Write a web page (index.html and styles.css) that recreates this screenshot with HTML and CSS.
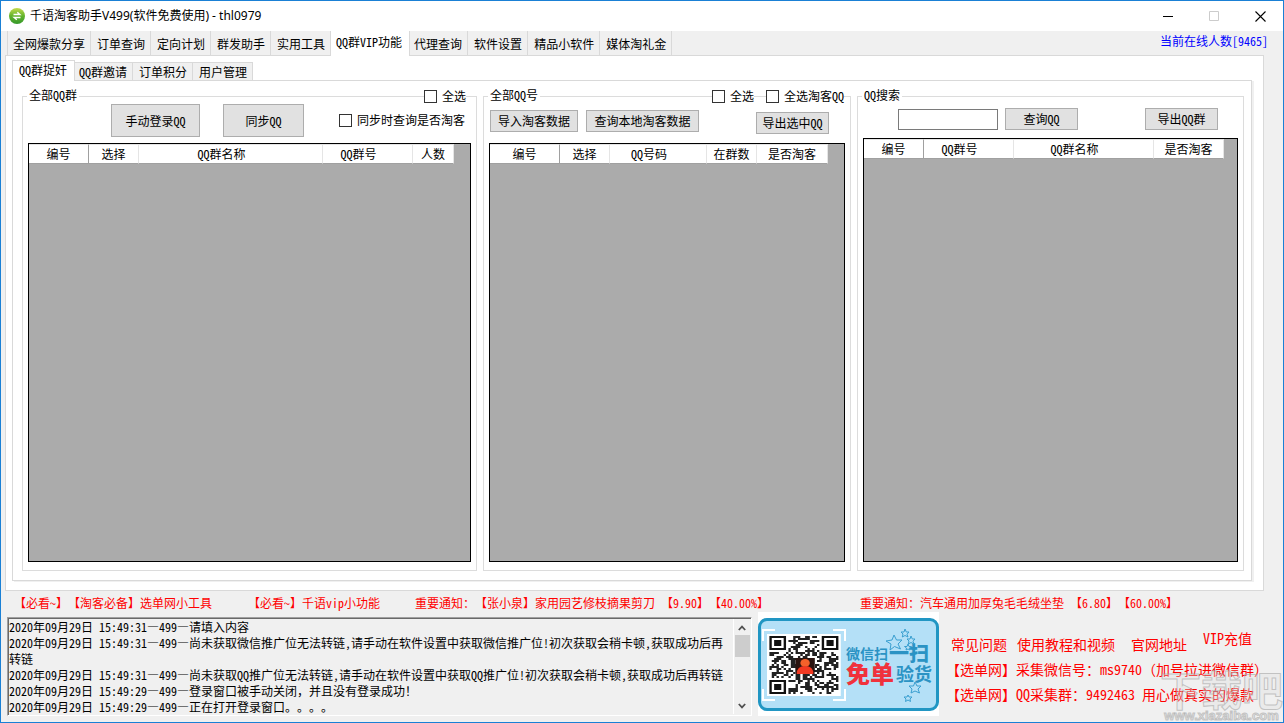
FILE: index.html
```html
<!DOCTYPE html>
<html lang="zh-CN">
<head>
<meta charset="utf-8">
<title>千语淘客助手V499(软件免费使用) - thl0979</title>
<link rel="stylesheet" href="styles.css">
</head>
<body>
<div class="window">
  <header class="titlebar">
    <svg class="app-icon" viewBox="0 0 16 16" aria-hidden="true">
      <defs><linearGradient id="leaf" x1="0" y1="0" x2="0" y2="1"><stop offset="0" stop-color="#c3da4c"/><stop offset=".5" stop-color="#62b32c"/><stop offset="1" stop-color="#35982c"/></linearGradient></defs>
      <circle cx="8" cy="8" r="8" fill="url(#leaf)"/>
      <path d="M4.500 6.500H10.500M8.300 4.300L10.800 6.500H8.500M11.500 9.500H5.500M7.800 11.700L5.200 9.500H7.500" fill="none" stroke="#fff" stroke-width="1.4"/>
    </svg>
    <h1 class="title">千语淘客助手V499(软件免费使用) - thl0979</h1>
    <button class="winbtn" type="button" aria-label="最小化"><svg viewBox="0 0 11 11"><path d="M0 5.500H10" stroke="#000"/></svg></button>
    <button class="winbtn" type="button" aria-label="最大化" disabled><svg viewBox="0 0 11 11"><path d="M.5 .5H9.500V9.500H.5Z" fill="none" stroke="#ccc"/></svg></button>
    <button class="winbtn" type="button" aria-label="关闭"><svg viewBox="0 0 11 11"><path d="M.5 .5L10.500 10.500M10.500 .5L.5 10.500" stroke="#000" stroke-width="1.1"/></svg></button>
  </header>

  <nav class="tabs main-tabs">
    <button type="button" class="tab">全网爆款分享</button>
    <button type="button" class="tab">订单查询</button>
    <button type="button" class="tab">定向计划</button>
    <button type="button" class="tab">群发助手</button>
    <button type="button" class="tab">实用工具</button>
    <button type="button" class="tab active">QQ群VIP功能</button>
    <button type="button" class="tab">代理查询</button>
    <button type="button" class="tab">软件设置</button>
    <button type="button" class="tab">精品小软件</button>
    <button type="button" class="tab">媒体淘礼金</button>
    <span class="online">当前在线人数[9465]</span>
  </nav>

  <main class="page">
    <nav class="tabs sub-tabs">
      <button type="button" class="tab active">QQ群捉奸</button>
      <button type="button" class="tab">QQ群邀请</button>
      <button type="button" class="tab">订单积分</button>
      <button type="button" class="tab">用户管理</button>
    </nav>
    <div class="panel">
      <fieldset class="group group-a">
        <legend>全部QQ群</legend>
        <div class="on-border"><label class="check"><input type="checkbox">全选</label></div>
        <div class="toolbar">
          <button type="button" class="btn big">手动登录QQ</button>
          <button type="button" class="btn big sync">同步QQ</button>
          <label class="check push"><input type="checkbox">同步时查询是否淘客</label>
        </div>
        <div class="grid">
          <table>
            <colgroup><col class="w60"><col class="w50"><col class="w184"><col class="w90"><col class="w41"></colgroup>
            <thead><tr><th class="first">编号</th><th>选择</th><th class="sort">QQ群名称</th><th class="sort">QQ群号</th><th>人数</th></tr></thead>
          </table>
        </div>
      </fieldset>

      <fieldset class="group group-b">
        <legend>全部QQ号</legend>
        <div class="on-border"><label class="check"><input type="checkbox">全选</label><label class="check"><input type="checkbox">全选淘客QQ</label></div>
        <div class="toolbar">
          <button type="button" class="btn">导入淘客数据</button>
          <button type="button" class="btn local">查询本地淘客数据</button>
          <button type="button" class="btn push">导出选中QQ</button>
        </div>
        <div class="grid">
          <table>
            <colgroup><col class="w70"><col class="w50"><col class="w97"><col class="w50"><col class="w71"></colgroup>
            <thead><tr><th class="first">编号</th><th>选择</th><th class="sort">QQ号码</th><th>在群数</th><th>是否淘客</th></tr></thead>
          </table>
        </div>
      </fieldset>

      <fieldset class="group group-c">
        <legend>QQ搜索</legend>
        <div class="toolbar">
          <input class="search" type="text" aria-label="QQ搜索">
          <button type="button" class="btn">查询QQ</button>
          <button type="button" class="btn push">导出QQ群</button>
        </div>
        <div class="grid">
          <table>
            <colgroup><col class="w60"><col class="w90"><col class="w140"><col class="w70"></colgroup>
            <thead><tr><th class="first">编号</th><th class="sort">QQ群号</th><th class="sort">QQ群名称</th><th>是否淘客</th></tr></thead>
          </table>
        </div>
      </fieldset>
    </div>
  </main>

  <div class="notices">
    <a href="#">【必看~】【淘客必备】选单网小工具</a>
    <a href="#">【必看~】千语vip小功能</a>
    <a href="#">重要通知：【张小泉】家用园艺修枝摘果剪刀 【9.90】【40.00%】</a>
    <a href="#">重要通知：汽车通用加厚兔毛毛绒坐垫 【6.80】【60.00%】</a>
  </div>

  <footer class="bottom">
    <div class="log">
      <textarea class="log-text" readonly aria-label="日志">2020年09月29日 15:49:31—499—请填入内容
2020年09月29日 15:49:31—499—尚未获取微信推广位无法转链,请手动在软件设置中获取微信推广位!初次获取会稍卡顿,获取成功后再转链
2020年09月29日 15:49:31—499—尚未获取QQ推广位无法转链,请手动在软件设置中获取QQ推广位!初次获取会稍卡顿,获取成功后再转链
2020年09月29日 15:49:29—499—登录窗口被手动关闭，并且没有登录成功！
2020年09月29日 15:49:29—499—正在打开登录窗口。。。。</textarea>
      <div class="scrollbar" aria-hidden="true">
        <svg viewBox="0 0 8 6"><path d="M.8 5L4 1.600L7.200 5" fill="none" stroke="#505050" stroke-width="1.800"/></svg>
        <div class="track"><div class="thumb"></div></div>
        <svg viewBox="0 0 8 6"><path d="M.8 1L4 4.400L7.200 1" fill="none" stroke="#505050" stroke-width="1.800"/></svg>
      </div>
    </div>

    <div class="banner">
      <div class="card">
        <svg class="qr" viewBox="0 0 84 72" role="img" aria-label="二维码">
          <path d="M1 12V1H13M71 1H83V12M83 60V71H71M13 71H1V60" fill="none" stroke="#fff" stroke-width="2"/>
          <g id="qr" transform="translate(5 5) scale(2.38 2)"></g>
        </svg>
        <div class="slogan">
          <p class="line1"><span>微信扫</span><b>一扫</b></p>
          <p class="line2"><strong>免单</strong><b>验货</b></p>
        </div>
        <svg class="stars" viewBox="0 0 36 74" fill="none" stroke="#3a9fd0" aria-hidden="true">
          <path d="M8 7L10.500 12L16 12L12 16L14.500 21L8.500 18.500L4 22L5 16L0 13L6 12Z"/>
          <path d="M19 1L20.300 4L23 4L21 6.200L22 9L19 7.500L16.300 9L17 6L15 4L18 4Z"/>
          <path d="M25 8L26.300 11L29 11L27 13.200L28 16L25 14.500L22.300 16L23 13L21 11L24 11Z"/>
          <path d="M22 16L23 18.500L25.500 18.500L23.500 20L24 22L22 21L20 22L20.500 20L18.500 18.500L21 18.500Z"/>
          <path d="M29 54L31 58L35 58L32 61L33.500 65L29 63L25 65L26 61L23 58L27.500 58Z"/>
          <path d="M22 67L23 69L26 69L24 71L24.500 73.500L22 72L19.500 73.500L20 71L18 69L21 69Z"/>
        </svg>
      </div>
    </div>

    <div class="info">
      <div class="links">
        <a href="#">常见问题</a><a href="#">使用教程和视频</a><a href="#" class="site">官网地址</a><a href="#" class="vip">VIP充值</a>
      </div>
      <p>【选单网】采集微信号：ms9740（加号拉进微信群）</p>
      <p>【选单网】QQ采集群：9492463 用心做真实的爆款</p>
    </div>
  </footer>
  <div class="watermark" aria-hidden="true"><span class="wm-name">下载吧</span><span class="wm-url">www.xiazaiba.com</span></div>
</div>
<script src="qr.js"></script>
</body>
</html>
```
FILE: styles.css
```css
* { box-sizing: border-box; }

body {
  margin: 0;
  color: #000;
  font-family: "Noto Sans Mono CJK SC", "Noto Sans CJK SC", "Liberation Sans", sans-serif;
  font-size: 12px;
  line-height: 16px;
  text-spacing-trim: space-all;
}

button, input, textarea { font: inherit; color: inherit; }
p, h1 { margin: 0; }
a { color: inherit; text-decoration: none; }

.window {
  position: relative;
  display: flex;
  flex-direction: column;
  min-height: 100vh;
  border: 1px solid #1a80d5;
  background: #f0f0f0;
  overflow: hidden;
}

/* Title bar */
.titlebar {
  display: flex;
  align-items: center;
  height: 30px;
  padding-left: 8px;
  background: #fff;
}
.app-icon { width: 16px; height: 16px; margin-right: 5px; }
.title {
  flex: 1;
  font: 400 12px/16px "Noto Sans", "Noto Sans CJK SC", sans-serif;
}
.winbtn {
  display: grid;
  place-items: center;
  width: 46px;
  height: 28px;
  padding: 0;
  border: 0;
  background: none;
}
.winbtn svg { width: 11px; height: 11px; }

/* Tabs */
.tabs { display: flex; align-items: flex-end; }
.tab {
  height: 24px;
  padding: 1px 5px 0 6px;
  border: 1px solid #d9d9d9;
  border-width: 1px 1px 0 0;
  background: #f0f0f0;
  white-space: nowrap;
}
.tab:first-child { border-left-width: 1px; padding-left: 5px; }
.tab.active {
  position: relative;
  background: #fff;
  margin-right: -2px;
  margin-bottom: -1px;
}
.main-tabs { height: 24px; padding-left: 6px; }
.main-tabs .tab { border-top: 0; }
.main-tabs .active { height: 25px; padding: 0 7px 3px 5px; }
.online {
  align-self: flex-start;
  margin-left: auto;
  padding: 2px 15px 0 0;
  color: #00f;
}

.page {
  flex: 1;
  display: flex;
  flex-direction: column;
  margin: 0 19px 0 4px;
  padding: 4px 11px 9px 6px;
  border: 1px solid #d9d9d9;
  background: #fff;
}
.sub-tabs { height: 20px; }
.sub-tabs .tab { height: 18px; padding-top: 0; }
.sub-tabs .active { height: 21px; padding: 0 7px 2px 6px; }
.panel {
  flex: 1;
  display: flex;
  gap: 6px;
  padding: 7px 7px 9px 9px;
  border: 1px solid #d9d9d9;
  box-shadow: 2px 1px 0 #f0f0f0;
}

/* Group boxes */
.group {
  position: relative;
  display: flex;
  flex-direction: column;
  min-width: 0;
  margin: 0;
  padding: 0 5px 8px;
  border: 1px solid #dcdcdc;
}
.group-a { flex: 1 1 455px; }
.group-b { flex: 1 1 368px; }
.group-c { flex: 1 1 387px; }
legend { height: 16px; margin-left: -1px; padding: 0 2px; line-height: 14px; }
.on-border {
  position: absolute;
  top: -16px;
  right: 10px;
  display: flex;
  gap: 12px;
}
.check {
  display: flex;
  align-items: center;
  gap: 5px;
  background: #fff;
  white-space: nowrap;
}
.check input {
  appearance: none;
  width: 13px;
  height: 13px;
  margin: 0;
  border: 1px solid #333;
  background: #fff;
}
.toolbar { display: flex; align-items: flex-start; height: 39px; }
.toolbar .push { margin-left: auto; }
.btn {
  height: 22px;
  min-width: 73px;
  padding: 0;
  border: 1px solid #adadad;
  background: #e1e1e1;
  line-height: 18px;
  white-space: nowrap;
}
.group-a .toolbar { padding: 0 6px 0 83px; }
.group-a .big { width: 89px; height: 33px; }
.group-a .sync { width: 81px; margin-left: 23px; }
.group-a .toolbar .check { margin-top: 8px; }
.group-b .on-border { right: 6px; }
.group-b .toolbar { gap: 8px; padding: 6px 16px 0 1px; }
.group-b .btn { width: 88px; }
.group-b .local { width: 113px; }
.group-b .btn.push { width: 73px; margin-top: 2px; }
.group-c .toolbar { height: 34px; gap: 7px; padding: 4px 20px 0 35px; }
.search {
  width: 100px;
  height: 21px;
  margin-top: 1px;
  border: 1px solid #7a7a7a;
  background: #fff;
}

/* Data grids */
.grid { flex: 1; border: 1px solid #000; background: #ababab; overflow: hidden; }
table { table-layout: fixed; width: 0; border-spacing: 0; }
th {
  height: 20px;
  padding: 0 0 1px;
  border: 1px solid #e5e5e5;
  border-width: 1px 1px 1px 0;
  border-bottom-color: #a0a0a0;
  background: #fff;
  font-weight: 400;
  line-height: 16px;
  white-space: nowrap;
}
th.first { border-right-color: #a0a0a0; }
th.sort { padding-right: 18px; }
.w41 { width: 41px; }
.w50 { width: 50px; }
.w60 { width: 60px; }
.w70 { width: 70px; }
.w71 { width: 71px; }
.w90 { width: 90px; }
.w97 { width: 97px; }
.w140 { width: 140px; }
.w184 { width: 184px; }

/* Notices */
.notices {
  display: grid;
  grid-template-columns: 234px 167px 445px 1fr;
  height: 26px;
  padding: 4px 0 0 13px;
  color: #f00;
  white-space: nowrap;
}

/* Bottom strip */
.bottom {
  display: flex;
  height: 105px;
  padding-left: 6px;
}
.log {
  flex: 1 1 745px;
  display: flex;
  height: 99px;
  border: 1px solid;
  border-color: #a0a0a0 #fff #fff #a0a0a0;
  box-shadow: inset 1px 1px 0 #696969;
}
.log-text {
  flex: 1;
  min-width: 0;
  margin: 1px 0 0 1px;
  padding: 0 6px 0 0;
  border: 0;
  outline: 0;
  resize: none;
  overflow: hidden;
  background: transparent;
  line-height: 16px;
  word-break: break-all;
}
.scrollbar {
  display: flex;
  flex-direction: column;
  align-items: center;
  width: 17px;
  margin: 1px 1px 1px 0;
  padding: 6px 0 5px;
  border-left: 1px solid #fff;
}
.scrollbar svg { width: 8px; height: 6px; }
.track { flex: 1; align-self: stretch; padding: 4px 0 0 1px; }
.thumb { height: 22px; background: #cdcdcd; }

.banner {
  flex: none;
  width: 181px;
  height: 104px;
  margin: -5px 6px 0;
  padding: 6px 0 5px;
  background: #fff;
}
.card {
  position: relative;
  display: flex;
  align-items: center;
  height: 93px;
  border: 3px solid #2196c3;
  border-radius: 9px;
  background: #b4e0f7;
}
.qr { flex: none; width: 84px; height: 72px; margin-left: 1px; }
.slogan {
  padding-bottom: 4px;
  color: #2b93c4;
  font-family: "Noto Sans CJK SC", sans-serif;
  line-height: 1;
  white-space: nowrap;
}
.slogan p { display: flex; align-items: center; }
.line1 { height: 20px; font-size: 14px; font-weight: 700; }
.line1 b { margin-left: 1px; font-size: 20px; }
.line2 { height: 20px; }
.line2 strong { color: #f0323c; font-size: 24px; font-weight: 900; }
.line2 b { margin-left: 2px; font-size: 18px; }
.stars { position: absolute; top: 7px; right: 14px; width: 36px; height: 74px; }

.info {
  flex: 1 1 338px;
  color: #f00;
  font-size: 14px;
  line-height: 20px;
  white-space: nowrap;
}
.links { display: flex; gap: 10px; padding: 17px 0 0 6px; }
.links .site { margin-left: 6px; }
.links .vip { margin: -6px 0 0 6px; }
.info p { height: 25px; padding: 5px 0 0 1px; }

.watermark {
  position: absolute;
  right: 0;
  bottom: 0;
  display: flex;
  flex-direction: column;
  align-items: center;
  color: rgba(225, 225, 225, .35);
  -webkit-text-stroke: 1px rgba(165, 165, 165, .6);
  pointer-events: none;
}
.wm-name { font: 700 41px/44px "Noto Sans CJK SC", sans-serif; }
.wm-url { font: 700 13px/12px "Liberation Sans", sans-serif; }
```
FILE: qr.js
```js
// Draws the QR code: finder squares, data modules and the centre portrait.
const svg = document.getElementById('qr');
const SIZE = 29;
let seed = 9465;
const rand = () => (seed = (seed * 1103515245 + 12345) % 2147483648) / 2147483648;
const inFinder = (x, y) => (x < 8 && y < 8) || (x > 20 && y < 8) || (x < 8 && y > 20);
let d = '';
for (let y = 0; y < SIZE; y++) {
  for (let x = 0; x < SIZE; x++) {
    const on = rand() < 0.52;
    if (on && !inFinder(x, y)) d += `M${x + 1} ${y + 1}h1v1h-1z`;
  }
}
const finder = (x, y) =>
  `<path fill="#111" fill-rule="evenodd" d="M${x} ${y}h7v7h-7zM${x + 1} ${y + 1}v5h5v-5zM${x + 2} ${y + 2}h3v3h-3z"/>`;
svg.innerHTML = `<path fill="#fff" d="M0 0h31v31h-31z"/><path fill="#222" d="${d}"/>` +
  finder(1, 1) + finder(23, 1) + finder(1, 23) +
  '<path fill="#2a1410" d="M12 12h8v8h-8z"/><circle cx="16" cy="14.500" r="2" fill="#f5612a"/><path fill="#f23a22" d="M12.500 20q0-4 3.500-4t3.500 4z"/>';
```
